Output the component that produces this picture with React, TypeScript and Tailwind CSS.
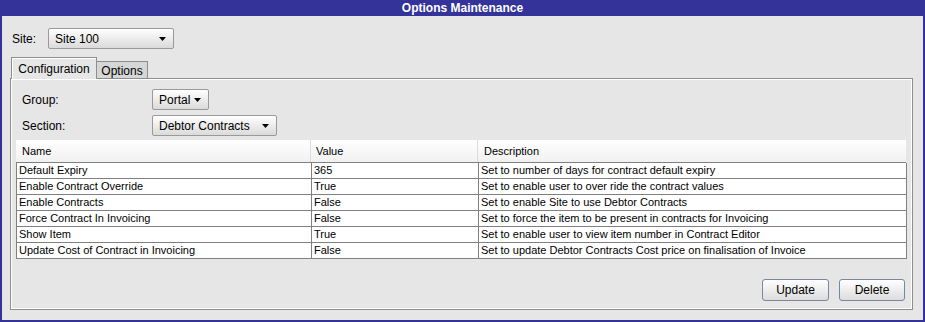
import React from 'react';

const rows = [
  { name: 'Default Expiry', value: '365', desc: 'Set to number of days for contract default expiry' },
  { name: 'Enable Contract Override', value: 'True', desc: 'Set to enable user to over ride the contract values' },
  { name: 'Enable Contracts', value: 'False', desc: 'Set to enable Site to use Debtor Contracts' },
  { name: 'Force Contract In Invoicing', value: 'False', desc: 'Set to force the item to be present in contracts for Invoicing' },
  { name: 'Show Item', value: 'True', desc: 'Set to enable user to view item number in Contract Editor' },
  { name: 'Update Cost of Contract in Invoicing', value: 'False', desc: 'Set to update Debtor Contracts Cost price on finalisation of Invoice' },
];

const Arrow = () => (
  <svg width="7" height="4" viewBox="0 0 7 4" className="shrink-0">
    <path d="M0 0h7L3.5 4z" fill="#000" />
  </svg>
);

const Combo = ({ label, width }: { label: string; width: string }) => (
  <div
    className={`${width} h-[21px] flex items-center justify-between pl-[6px] pr-[7px] border border-[#9a9a9a] rounded-[2px] bg-gradient-to-b from-white to-[#dadada] text-[12px] text-black`}
  >
    <span className="leading-none">{label}</span>
    <Arrow />
  </div>
);

const Button = ({ label, width }: { label: string; width: string }) => (
  <button
    className={`${width} h-[22px] border border-[#7a86a0] rounded-[3px] bg-gradient-to-b from-white to-[#dcdcdc] text-[12px] text-black leading-none`}
  >
    {label}
  </button>
);

export default function App() {
  return (
    <div className="w-[925px] h-[322px] flex flex-col font-['Liberation_Sans',Arial,sans-serif] select-none">
      <div className="h-[16px] bg-[#333399] text-white text-[12px] font-bold leading-[16px] text-center">
        Options Maintenance
      </div>

      <div className="flex-1 bg-[#e6e6e6] border-x-2 border-b-2 border-[#333399] pt-[12px] pl-[8px]">
        <div className="flex items-center pl-[2px] text-[12px] text-black">
          <span className="w-[36px]">Site:</span>
          <Combo label="Site 100" width="w-[126px]" />
        </div>

        <div className="mt-[8px] flex items-end h-[21px] pl-[1px] text-[12px] text-black">
          <div className="relative z-10 -mb-px h-[22px] w-[86px] border border-b-0 border-[#8e8e8e] bg-[#e6e6e6] shadow-[inset_1px_1px_0_#fff] flex items-center justify-center">
            Configuration
          </div>
          <div className="h-[17px] w-[51px] border border-l-0 border-b-0 border-[#8e8e8e] bg-[#d6d6d6] flex items-center justify-center pt-[1px]">
            Options
          </div>
        </div>

        <div className="w-[903px] h-[232px] border border-[#8e8e8e] shadow-[inset_0_0_0_1px_#fff] flex flex-col pt-[10px] pl-[5px] pr-[7px] pb-[8px]">
          <div className="flex items-center pl-[6px] text-[12px] text-black">
            <span className="w-[130px]">Group:</span>
            <Combo label="Portal" width="w-[57px]" />
          </div>
          <div className="mt-[5px] flex items-center pl-[6px] text-[12px] text-black">
            <span className="w-[130px]">Section:</span>
            <Combo label="Debtor Contracts" width="w-[125px]" />
          </div>

          <div className="mt-[4px] w-[890px] text-[11px] text-black">
            <div className="grid grid-cols-[295px_167px_428px] h-[22px] bg-gradient-to-b from-white to-[#f1f1f1]">
              <div className="pl-[6px] flex items-center border-r border-[#dcdcdc]">Name</div>
              <div className="pl-[5px] flex items-center border-r border-[#dcdcdc]">Value</div>
              <div className="pl-[6px] flex items-center">Description</div>
            </div>
            <div className="border-t border-l border-[#808080] bg-white">
              {rows.map((r) => (
                <div key={r.name} className="grid grid-cols-[295px_167px_428px] h-[16px]">
                  <div className="pl-[2px] leading-[15px] border-r border-b border-[#808080] whitespace-nowrap overflow-hidden">{r.name}</div>
                  <div className="pl-[2px] leading-[15px] border-r border-b border-[#808080] whitespace-nowrap overflow-hidden">{r.value}</div>
                  <div className="pl-[2px] leading-[15px] border-r border-b border-[#808080] whitespace-nowrap overflow-hidden">{r.desc}</div>
                </div>
              ))}
            </div>
          </div>

          <div className="flex-1" />
          <div className="flex justify-end gap-[10px]">
            <Button label="Update" width="w-[67px]" />
            <Button label="Delete" width="w-[66px]" />
          </div>
        </div>
      </div>
    </div>
  );
}
